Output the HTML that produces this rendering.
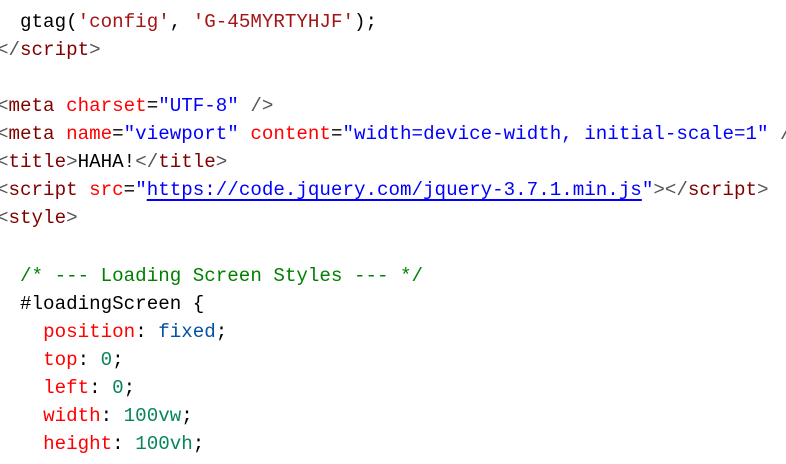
<!DOCTYPE html>
<html><head><meta charset="utf-8"><style>
html,body{margin:0;padding:0;background:#fff;width:786px;height:464px;overflow:hidden}
pre{margin:0;position:absolute;left:-3px;font-family:"Liberation Mono",monospace;font-size:19.2px;line-height:28px;color:#000;white-space:pre}
.b{color:#555}.t{color:#800000}.a{color:#f00}.v{color:#00f}.s{color:#a31515}.c{color:#008000}.k{color:#0451a5}.n{color:#098658}.sel{color:#000}
u{text-decoration:underline;text-decoration-color:#00f;text-underline-offset:4px;text-decoration-thickness:2px}
</style></head><body>
<pre style="top:8px">  gtag(<span class="s">'config'</span>, <span class="s">'G-45MYRTYHJF'</span>);
<span class="b">&lt;/</span><span class="t">script</span><span class="b">&gt;</span>

<span class="b">&lt;</span><span class="t">meta</span> <span class="a">charset</span>=<span class="v">"UTF-8"</span> <span class="b">/&gt;</span>
<span class="b">&lt;</span><span class="t">meta</span> <span class="a">name</span>=<span class="v">"viewport"</span> <span class="a">content</span>=<span class="v">"width=device-width, initial-scale=1"</span> <span class="b">/&gt;</span>
<span class="b">&lt;</span><span class="t">title</span><span class="b">&gt;</span>HAHA!<span class="b">&lt;/</span><span class="t">title</span><span class="b">&gt;</span>
<span class="b">&lt;</span><span class="t">script</span> <span class="a">src</span>=<span class="v">"<u>https://code.jquery.com/jquery-3.7.1.min.js</u>"</span><span class="b">&gt;&lt;/</span><span class="t">script</span><span class="b">&gt;</span>
<span class="b">&lt;</span><span class="t">style</span><span class="b">&gt;</span></pre>
<pre style="top:262px">  <span class="c">/* --- Loading Screen Styles --- */</span>
  <span class="sel">#loadingScreen</span> {
    <span class="a">position</span>: <span class="k">fixed</span>;
    <span class="a">top</span>: <span class="n">0</span>;
    <span class="a">left</span>: <span class="n">0</span>;
    <span class="a">width</span>: <span class="n">100vw</span>;
    <span class="a">height</span>: <span class="n">100vh</span>;
</pre>
</body></html>
